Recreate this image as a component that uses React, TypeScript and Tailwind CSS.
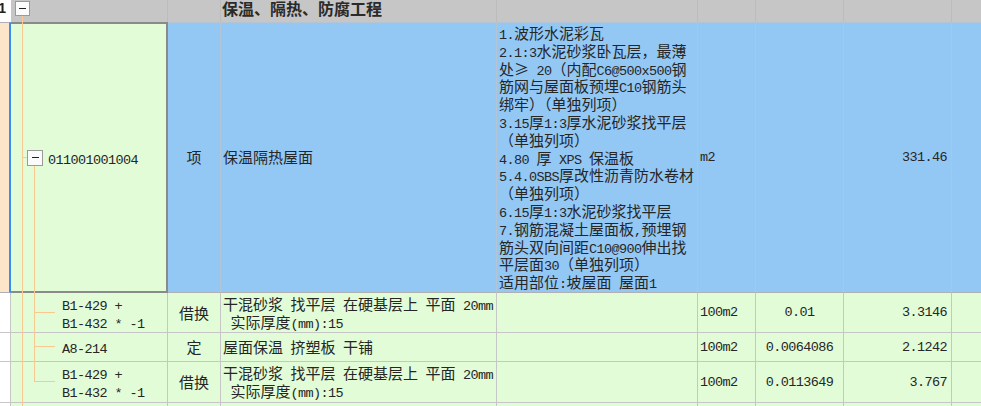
import React from "react";

const cols =
  "grid grid-cols-[11px_157px_53px_276px_201px_58px_88px_108px_29px]";
const base =
  "font-['Noto_Sans_CJK_SC',sans-serif] text-[15px] text-[#262626]";

function T({ s }: { s: string }) {
  const parts = s.split(/([\x20-\x7E]+)/);
  return (
    <>
      {parts.map((p, i) =>
        i % 2 === 1 ? (
          <span
            key={i}
            className="font-['Liberation_Mono',monospace] text-[13.5px] tracking-[-0.6px] leading-[11px]"
          >
            {p}
          </span>
        ) : p ? (
          <span key={i}>{p}</span>
        ) : null
      )}
    </>
  );
}

const descLines = [
  "1.波形水泥彩瓦",
  "2.1:3水泥砂浆卧瓦层，最薄",
  "处≥ 20（内配C6@500x500钢",
  "筋网与屋面板预埋C10钢筋头",
  "绑牢）（单独列项）",
  "3.15厚1:3厚水泥砂浆找平层",
  "（单独列项）",
  "4.80 厚 XPS 保温板",
  "5.4.0SBS厚改性沥青防水卷材",
  "（单独列项）",
  "6.15厚1:3水泥砂浆找平层",
  "7.钢筋混凝土屋面板,预埋钢",
  "筋头双向间距C10@900伸出找",
  "平层面30（单独列项）",
  "适用部位:坡屋面 屋面1",
];

type Row = {
  h: string;
  code: string[];
  type: string;
  name: string[];
  unit: string;
  qty: string;
  price: string;
  branch: "mid" | "last";
};

const rows: Row[] = [
  {
    h: "h-[40px]",
    code: ["B1-429 +", "B1-432 * -1"],
    type: "借换",
    name: ["干混砂浆 找平层 在硬基层上 平面 20mm", " 实际厚度(mm):15"],
    unit: "100m2",
    qty: "0.01",
    price: "3.3146",
    branch: "mid",
  },
  {
    h: "h-[29px]",
    code: ["A8-214"],
    type: "定",
    name: ["屋面保温 挤塑板 干铺"],
    unit: "100m2",
    qty: "0.0064086",
    price: "2.1242",
    branch: "mid",
  },
  {
    h: "h-[41px]",
    code: ["B1-429 +", "B1-432 * -1"],
    type: "借换",
    name: ["干混砂浆 找平层 在硬基层上 平面 20mm", " 实际厚度(mm):15"],
    unit: "100m2",
    qty: "0.0113649",
    price: "3.767",
    branch: "last",
  },
];

const orange = "bg-[#f9c98f]";

function Box({ size }: { size: string }) {
  return (
    <div
      className={`${size} border border-[#9a9a9a] bg-[#fbfbfb] flex items-center justify-center shrink-0`}
    >
      <div className="w-[7px] h-[1.5px] bg-[#222]" />
    </div>
  );
}

export default function App() {
  const gcell = "border-r border-b border-[#c6c6c6]";
  return (
    <div className={`w-[981px] h-[406px] overflow-hidden bg-white ${base}`}>
      {/* header group row */}
      <div className={`${cols} h-[22px] bg-[#c6c6c6]`}>
        <div className="bg-white flex justify-end pr-[5px] overflow-hidden font-['Liberation_Sans',sans-serif] font-bold text-[14px] leading-[16px] text-[#222]">
          1
        </div>
        <div className="relative border-r border-[#bcbcbc]">
          <div className="absolute left-[4px] top-[1px]">
            <Box size="w-[15px] h-[15px]" />
          </div>
          <div className={`absolute left-[11px] top-[16px] bottom-0 w-px ${orange}`} />
        </div>
        <div className="border-r border-[#bcbcbc]" />
        <div className="border-r border-[#bcbcbc] pl-[1px] font-bold text-[16px] leading-[16px] text-[#2a2a2a] whitespace-nowrap">
          保温、隔热、防腐工程
        </div>
        <div className="border-r border-[#bcbcbc]" />
        <div className="border-r border-[#bcbcbc]" />
        <div className="border-r border-[#bcbcbc]" />
        <div className="border-r border-[#bcbcbc]" />
        <div />
      </div>

      {/* selected list item row */}
      <div className={`${cols} h-[271px] bg-[#93c8f5]`}>
        <div className="bg-[#fde5c9] border-t border-b border-[#b0b0b0] border-r-2 border-r-[#3b8df0]" />
        <div className="relative bg-[#e2fcd8] border-t-2 border-b-2 border-r-2 border-[#8a8a8a] flex items-center pl-[16px]">
          <div className={`absolute left-[11px] top-[-2px] bottom-[-2px] w-px ${orange}`} />
          <div className={`absolute left-[11px] top-1/2 -mt-px w-[5px] h-px ${orange}`} />
          <div className={`absolute left-[23px] top-[calc(50%+7px)] bottom-[-2px] w-px ${orange}`} />
          <Box size="w-[16px] h-[16px] relative" />
          <span className="pl-[5px] leading-[18px]">
            <T s="011001001004" />
          </span>
        </div>
        <div className="border-t border-b border-r border-[#b3c4d4] border-b-[#b0b0b0] flex items-center justify-center">
          项
        </div>
        <div className="border-t border-b border-r border-[#b3c4d4] border-b-[#b0b0b0] flex items-center pl-[2px]">
          保温隔热屋面
        </div>
        <div className="border-t border-b border-r border-[#b3c4d4] border-b-[#b0b0b0] pt-[1px] pl-[2px] leading-[17.8px] whitespace-pre overflow-hidden">
          {descLines.map((l, i) => (
            <div key={i}>
              <T s={l} />
            </div>
          ))}
        </div>
        <div className="border-t border-b border-r border-[#b3c4d4] border-b-[#b0b0b0] flex items-center pl-[2px]">
          <T s="m2" />
        </div>
        <div className="border-t border-b border-r border-[#b3c4d4] border-b-[#b0b0b0]" />
        <div className="border-t border-b border-r border-[#b3c4d4] border-b-[#b0b0b0] flex items-center justify-end pr-[4px]">
          <T s="331.46" />
        </div>
        <div className="border-t border-b border-[#b3c4d4] border-b-[#b0b0b0]" />
      </div>

      {/* sub rows */}
      {rows.map((r, idx) => (
        <div key={idx} className={`${cols} ${r.h} bg-[#e2fcd8]`}>
          <div className="bg-white border-r border-b border-[#c6c6c6]" />
          <div className={`relative ${gcell} flex flex-col justify-center pl-[51px] leading-[18px] whitespace-pre`}>
            <div className={`absolute left-[11px] top-0 bottom-[-1px] w-px ${orange}`} />
            <div
              className={`absolute left-[23px] top-0 w-px ${orange} ${
                r.branch === "last" ? "h-1/2" : "bottom-[-1px]"
              }`}
            />
            <div className={`absolute left-[23px] top-1/2 -mt-px w-[21px] h-px ${orange}`} />
            {r.code.map((c, i) => (
              <div key={i}>
                <T s={c} />
              </div>
            ))}
          </div>
          <div className={`${gcell} flex items-center justify-center leading-[18px]`}>
            {r.type}
          </div>
          <div className={`${gcell} flex flex-col justify-center pl-[2px] leading-[18px] whitespace-pre overflow-hidden`}>
            {r.name.map((n, i) => (
              <div key={i}>
                <T s={n} />
              </div>
            ))}
          </div>
          <div className={gcell} />
          <div className={`${gcell} flex items-center pl-[2px] leading-[18px]`}>
            <T s={r.unit} />
          </div>
          <div className={`${gcell} flex items-center justify-center leading-[18px]`}>
            <T s={r.qty} />
          </div>
          <div className={`${gcell} flex items-center justify-end pr-[4px] leading-[18px]`}>
            <T s={r.price} />
          </div>
          <div className="border-b border-[#c6c6c6]" />
        </div>
      ))}

      {/* partially visible next row */}
      <div className={`${cols} h-[30px] bg-[#e2fcd8]`}>
        <div className="bg-white border-r border-[#c6c6c6]" />
        <div className="relative border-r border-[#c6c6c6]">
          <div className={`absolute left-[11px] top-0 bottom-0 w-px ${orange}`} />
        </div>
        <div className="border-r border-[#c6c6c6]" />
        <div className="border-r border-[#c6c6c6]" />
        <div className="border-r border-[#c6c6c6] pt-[1px] pl-[2px] leading-[17.8px] whitespace-pre text-[#555]">
          <T s="1.20厚1:3水泥砂浆保护层" />
        </div>
        <div className="border-r border-[#c6c6c6]" />
        <div className="border-r border-[#c6c6c6]" />
        <div className="border-r border-[#c6c6c6]" />
        <div />
      </div>
    </div>
  );
}
